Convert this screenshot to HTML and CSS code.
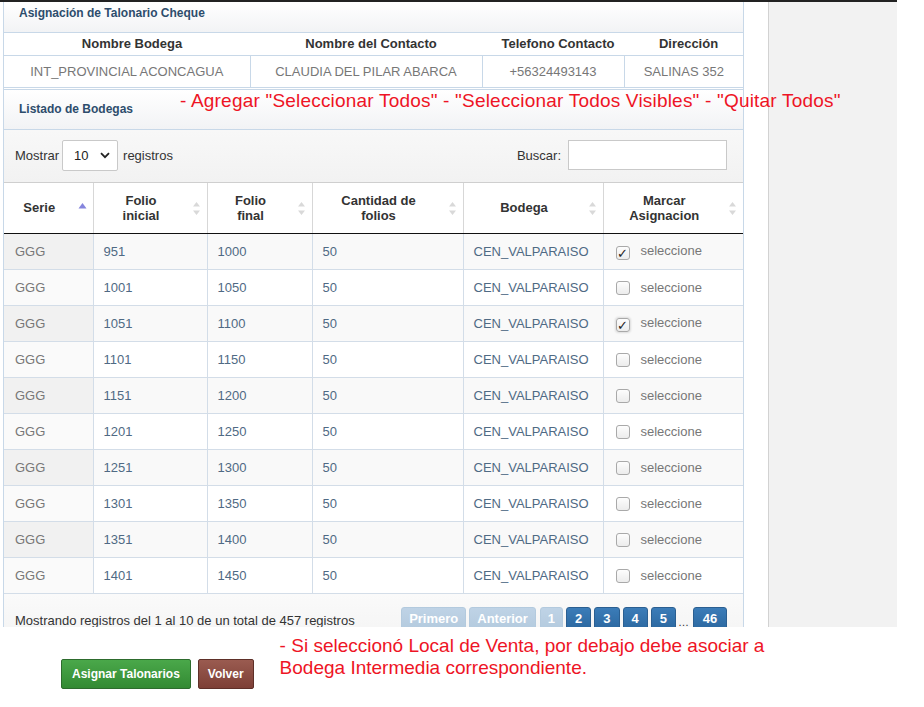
FILE: index.html
```html
<!DOCTYPE html>
<html lang="es">
<head>
<meta charset="utf-8">
<title>Asignación de Talonario Cheque</title>
<link rel="stylesheet" href="styles.css">
</head>
<body>
<div class="screen">
  <div class="main">
    <div class="panel-head">Asignación de Talonario Cheque</div>
    <table class="info">
      <thead>
        <tr><th class="c1">Nombre Bodega</th><th class="c2">Nombre del Contacto</th><th class="c3">Telefono Contacto</th><th class="c4">Dirección</th></tr>
      </thead>
      <tbody>
        <tr><td>INT_PROVINCIAL ACONCAGUA</td><td>CLAUDIA DEL PILAR ABARCA</td><td>+56324493143</td><td>SALINAS 352</td></tr>
      </tbody>
    </table>
    <div class="panel-head second">Listado de Bodegas</div>
    <div class="controls">
      <label class="length">Mostrar
        <span class="select"><span>10</span>
          <svg width="10" height="7" viewBox="0 0 10 7"><path d="M1 1.2 L5 5.2 L9 1.2" fill="none" stroke="#222" stroke-width="1.8"/></svg>
        </span>
        registros</label>
      <label class="search">Buscar: <span class="input"></span></label>
    </div>
    <table class="grid">
      <thead>
        <tr>
          <th class="w1">Serie<svg class="sort" width="9" height="14" viewBox="0 0 9 14"><path d="M4.5 0 L8.5 5.5 H0.5Z" fill="#8585dd"/></svg></th>
          <th class="w2">Folio<br>inicial<svg class="sort" width="9" height="14" viewBox="0 0 9 14"><path d="M4.5 0 L8 4.5 H1Z M1 8.5 H8 L4.5 13Z" fill="#d9d9d9"/></svg></th>
          <th class="w3">Folio<br>final<svg class="sort" width="9" height="14" viewBox="0 0 9 14"><path d="M4.5 0 L8 4.5 H1Z M1 8.5 H8 L4.5 13Z" fill="#d9d9d9"/></svg></th>
          <th class="w4">Cantidad de<br>folios<svg class="sort" width="9" height="14" viewBox="0 0 9 14"><path d="M4.5 0 L8 4.5 H1Z M1 8.5 H8 L4.5 13Z" fill="#d9d9d9"/></svg></th>
          <th class="w5">Bodega<svg class="sort" width="9" height="14" viewBox="0 0 9 14"><path d="M4.5 0 L8 4.5 H1Z M1 8.5 H8 L4.5 13Z" fill="#d9d9d9"/></svg></th>
          <th class="w6">Marcar<br>Asignacion<svg class="sort" width="9" height="14" viewBox="0 0 9 14"><path d="M4.5 0 L8 4.5 H1Z M1 8.5 H8 L4.5 13Z" fill="#d9d9d9"/></svg></th>
        </tr>
      </thead>
      <tbody>
        <tr class="odd"><td class="serie">GGG</td><td>951</td><td>1000</td><td>50</td><td>CEN_VALPARAISO</td><td><span class="cb on">✓</span>seleccione</td></tr>
        <tr class="even"><td class="serie">GGG</td><td>1001</td><td>1050</td><td>50</td><td>CEN_VALPARAISO</td><td><span class="cb"></span>seleccione</td></tr>
        <tr class="odd"><td class="serie">GGG</td><td>1051</td><td>1100</td><td>50</td><td>CEN_VALPARAISO</td><td><span class="cb on focus">✓</span>seleccione</td></tr>
        <tr class="even"><td class="serie">GGG</td><td>1101</td><td>1150</td><td>50</td><td>CEN_VALPARAISO</td><td><span class="cb"></span>seleccione</td></tr>
        <tr class="odd"><td class="serie">GGG</td><td>1151</td><td>1200</td><td>50</td><td>CEN_VALPARAISO</td><td><span class="cb"></span>seleccione</td></tr>
        <tr class="even"><td class="serie">GGG</td><td>1201</td><td>1250</td><td>50</td><td>CEN_VALPARAISO</td><td><span class="cb"></span>seleccione</td></tr>
        <tr class="odd"><td class="serie">GGG</td><td>1251</td><td>1300</td><td>50</td><td>CEN_VALPARAISO</td><td><span class="cb"></span>seleccione</td></tr>
        <tr class="even"><td class="serie">GGG</td><td>1301</td><td>1350</td><td>50</td><td>CEN_VALPARAISO</td><td><span class="cb"></span>seleccione</td></tr>
        <tr class="odd"><td class="serie">GGG</td><td>1351</td><td>1400</td><td>50</td><td>CEN_VALPARAISO</td><td><span class="cb"></span>seleccione</td></tr>
        <tr class="even"><td class="serie">GGG</td><td>1401</td><td>1450</td><td>50</td><td>CEN_VALPARAISO</td><td><span class="cb"></span>seleccione</td></tr>
      </tbody>
    </table>
    <div class="footer">
      <div class="count">Mostrando registros del 1 al 10 de un total de 457 registros</div>
      <div class="pager">
        <span class="pg off">Primero</span>
        <span class="pg off">Anterior</span>
        <span class="pg off num">1</span>
        <span class="pg num">2</span>
        <span class="pg num">3</span>
        <span class="pg num">4</span>
        <span class="pg num">5</span>
        <span class="dots">…</span>
        <span class="pg num">46</span>
      </div>
    </div>
  </div>
  <div class="side"></div>
  <div class="note-top">- Agregar "Seleccionar Todos" - "Seleccionar Todos Visibles" - "Quitar Todos"</div>
</div>
<div class="bottom">
  <div class="actions">
    <button class="btn green">Asignar Talonarios</button>
    <button class="btn brown">Volver</button>
  </div>
  <div class="note">- Si seleccionó Local de Venta, por debajo debe asociar a<br>Bodega Intermedia correspondiente.</div>
</div>
</body>
</html>
```

FILE: styles.css
```css
* { box-sizing: border-box; }
body {
  margin: 0;
  background: #fff;
  font-family: "Liberation Sans", Arial, sans-serif;
  font-size: 13px;
  color: #333;
}
.screen {
  position: relative;
  display: flex;
  width: 897px;
  height: 627px;
  overflow: hidden;
  border-top: 2px solid #222;
}
.main {
  margin-left: 3px;
  width: 741px;
  flex: none;
  border-left: 1px solid #c8d8e8;
  border-right: 1px solid #c8d8e8;
  background: #fff;
}
.side {
  margin-left: 24px;
  width: 129px;
  flex: none;
  border-left: 1px solid #d2d2d2;
  background: #f2f2f2;
}
.panel-head {
  height: 31px;
  padding: 3px 0 0 15px;
  line-height: 16px;
  font-size: 12px;
  font-weight: bold;
  color: #2d4d6c;
  background: linear-gradient(#ffffff, #f2f3f5);
  border-bottom: 1px solid #c8d8e8;
}
.panel-head.second {
  height: 41px;
  margin-top: 1px;
  padding-top: 11px;
  border-top: 1px solid #c8d8e8;
}
table { border-collapse: collapse; width: 100%; }
.info th {
  height: 22px;
  padding: 0 0 0 10px;
  font-weight: bold;
  font-size: 13px;
  color: #333;
  text-align: center;
  border-bottom: 1px solid #c8d8e8;
  background: #fff;
}
.info .c1 { width: 246px; }
.info .c2 { width: 232px; }
.info .c3 { width: 142px; }
.info td {
  height: 32px;
  padding: 0;
  text-align: center;
  color: #777;
  font-size: 13px;
  border-bottom: 1px solid #c8d8e8;
  border-left: 1px solid #c8d8e8;
}
.info td:first-child { border-left: none; }
.controls {
  height: 53px;
  padding: 10px 16px 0 11px;
  display: flex;
  justify-content: space-between;
  align-items: flex-start;
  background: linear-gradient(#f8f8f8, #f2f2f2);
  border-bottom: 1px solid #cfcfcf;
}
.length, .search {
  display: flex;
  align-items: center;
  height: 31px;
  color: #333;
}
.select {
  display: inline-flex;
  align-items: center;
  justify-content: space-between;
  width: 56px;
  height: 31px;
  margin: 0 5px 0 3px;
  padding: 0 7px 0 11px;
  border: 1px solid #c9c9c9;
  border-radius: 2px;
  background: #fff;
  color: #222;
}
.search .input {
  display: inline-block;
  width: 159px;
  height: 30px;
  margin-left: 7px;
  margin-top: -1px;
  border: 1px solid #c9c9c9;
  background: #fff;
}
.grid th {
  position: relative;
  height: 51px;
  padding: 0 28px 0 10px;
  font-weight: bold;
  font-size: 13px;
  line-height: 15px;
  color: #333;
  text-align: center;
  background: #fff;
  border-left: 1px solid #d7d7d7;
  border-bottom: 1px solid #111;
}
.grid th:first-child { border-left: none; }
.grid .w1 { width: 89px; }
.grid .w2 { width: 114px; }
.grid .w3 { width: 105px; }
.grid .w4 { width: 151px; }
.grid .w5 { width: 140px; }
.sort {
  position: absolute;
  right: 6px;
  top: 19px;
}
.grid .w1 .sort { top: 20px; }
.grid td {
  height: 36px;
  padding: 0 10px;
  font-size: 13px;
  color: #4f6a84;
  border-left: 1px solid #d3dde8;
  border-bottom: 1px solid #d3dde8;
  white-space: nowrap;
}
.grid td:first-child { border-left: none; }
.grid td:last-child { padding-left: 12px; color: #777; }
.grid td.serie { color: #777; padding-left: 11px; }
.grid tr.odd td { background: #f9f9f9; }
.grid tr.odd td.serie { background: #f1f1f1; }
.grid tr.even td { background: #fff; }
.grid tr.even td.serie { background: #fafafa; }
.cb {
  display: inline-block;
  vertical-align: -3px;
  width: 14px;
  height: 14px;
  margin-right: 11px;
  border: 1px solid #a9a9a9;
  border-radius: 3px;
  background: linear-gradient(#fdfdfd, #ececec);
  color: #222;
  font-size: 13px;
  font-weight: bold;
  line-height: 13px;
  text-align: center;
  font-family: "DejaVu Sans", sans-serif;
}
.cb.focus { box-shadow: 0 0 2px 1px #dcdcdc; }
.footer {
  display: flex;
  justify-content: space-between;
  align-items: flex-start;
  padding: 13px 16px 0 11px;
  height: 40px;
  background: linear-gradient(#fafafa, #f5f5f5);
}
.count { margin-top: 6px; color: #333; }
.pager { display: flex; align-items: flex-start; }
.pg {
  height: 24px;
  margin-left: 3px;
  padding: 3px 8px 0;
  font-weight: bold;
  font-size: 13px;
  line-height: 16px;
  color: #fff;
  border: 1px solid #2b5f91;
  border-radius: 3px 3px 0 0;
  background: linear-gradient(#3b7cb8, #2b679f);
}
.pg.num { padding: 3px 8px 0; min-width: 25px; text-align: center; }
.pg.off {
  padding: 3px 7px 0;
  border-color: #b3cade;
  background: linear-gradient(#bfd3e6, #b3cade);
}
.pg.off.num { min-width: 23px; margin-left: 4px; }
.pg.off:first-child { margin-left: 0; }
.dots { margin-top: 9px; padding: 0 2px; color: #333; font-size: 11px; }
.dots + .pg { margin-left: 2px; padding: 3px 8px 0; min-width: 34px; }
.note-top {
  position: absolute;
  left: 180px;
  top: 88px;
  font-size: 19px;
  letter-spacing: 0.2px;
  line-height: 22px;
  color: #ee1425;
  white-space: nowrap;
}
.bottom {
  display: flex;
  align-items: flex-start;
  padding: 8px 0 0 61px;
}
.actions {
  display: flex;
  gap: 7px;
  margin-top: 24px;
}
.btn {
  height: 30px;
  padding: 0 10px;
  font-family: "Liberation Sans", Arial, sans-serif;
  font-size: 12px;
  font-weight: bold;
  color: #fff;
  border-radius: 2px;
  cursor: pointer;
}
.btn.green {
  border: 1px solid #2d6b2d;
  background: linear-gradient(#4aa84a, #338a33);
}
.btn.brown {
  padding: 0 9px;
  border: 1px solid #5e2f28;
  background: linear-gradient(#9a5b50, #7d3f36);
}
.note {
  margin-left: 26px;
  font-size: 19px;
  line-height: 22px;
  color: #ee1425;
}
```
